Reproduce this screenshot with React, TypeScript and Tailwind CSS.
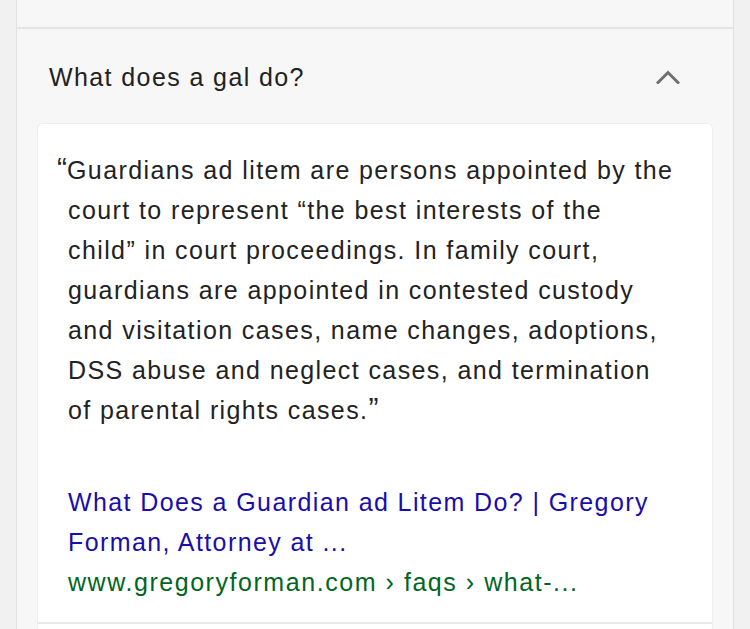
import React from 'react';

const font = { fontFamily: '"Liberation Sans", Arial, Helvetica, sans-serif' };

const quoteLines = [
  'Guardians ad litem are persons appointed by the',
  'court to represent “the best interests of the',
  'child” in court proceedings. In family court,',
  'guardians are appointed in contested custody',
  'and visitation cases, name changes, adoptions,',
  'DSS abuse and neglect cases, and termination',
];

export default function App() {
  return (
    <div className="min-h-screen bg-[#f1f1f1] px-4" style={font}>
      <div className="min-h-[629px] border-x border-[#e2e2e2] bg-[#f7f7f7]">
        <div className="h-[29px] border-b-2 border-[#e4e4e4]" />

        <div className="px-[21px]">
          {/* question row */}
          <div className="mt-[32px] flex h-[32px] items-center justify-between pl-[11px] pr-[32px]">
            <span className="text-[25px] leading-[32px] tracking-[1.4px] text-[#222]">What does a gal do?</span>
            <svg width="24" height="14" viewBox="0 0 24 14" fill="none">
              <path d="M2 12.5 L12 2.5 L22 12.5" stroke="#707070" strokeWidth="3" strokeLinecap="square" />
            </svg>
          </div>

          {/* answer card */}
          <div className="mt-[31px] rounded-[5px] bg-white shadow-[0_0_0_1px_#ededed]">
            <div className="border-b-2 border-[#e8e8e8] pt-[26px] pr-[16px] pb-[20px] pl-[30px]">
              <p className="whitespace-nowrap text-[25px] leading-[40px] tracking-[1.4px] text-[#222]">
                <span className="-ml-[11px] align-top text-[30px] leading-[36px] tracking-normal">“</span>
                {quoteLines.map((l, i) => (
                  <React.Fragment key={i}>
                    {l}
                    <br />
                  </React.Fragment>
                ))}
                of parental rights cases.
                <span className="align-top text-[30px] leading-[36px] tracking-normal">”</span>
              </p>

              <div className="mt-[52px] whitespace-nowrap text-[25px] leading-[40px]">
                <a className="block tracking-[1.4px] text-[#1a0dab]" href="#">
                  What Does a Guardian ad Litem Do? | Gregory
                  <br />
                  Forman, Attorney at ...
                </a>
                <div className="tracking-[1.55px] text-[#006621]">www.gregoryforman.com › faqs › what-...</div>
              </div>
            </div>
            <div className="h-[8px]" />
          </div>
        </div>
      </div>
    </div>
  );
}
